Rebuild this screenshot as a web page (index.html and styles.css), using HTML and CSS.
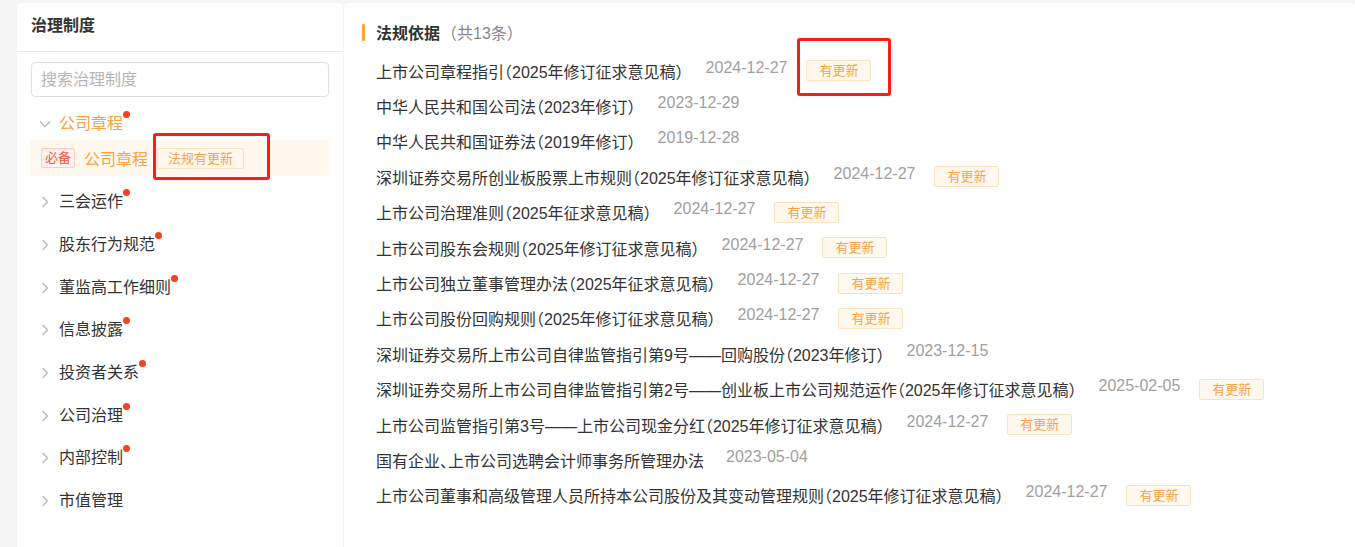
FILE: index.html
```html
<!DOCTYPE html>
<html lang="zh">
<head>
<meta charset="utf-8">
<title>治理制度</title>
<link rel="stylesheet" href="styles.css">
</head>
<body>
<div class="page">
  <aside class="side">
    <div class="side-head">治理制度</div>
    <div class="search"><input type="text" placeholder="搜索治理制度"></div>
    <div class="tree">
      <div class="node open">
        <svg class="chev" viewBox="0 0 12 12"><path d="M1 3.5 L6 8.5 L11 3.5" fill="none" stroke="#b4b9c1" stroke-width="1.4"/></svg>
        <span class="label dot">公司章程</span>
      </div>
      <div class="leaf">
        <span class="must">必备</span>
        <span class="leaf-text">公司章程</span>
        <span class="tag wide">法规有更新</span>
      </div>
      <div class="node"><svg class="chev" viewBox="0 0 12 12"><path d="M3.5 1 L8.5 6 L3.5 11" fill="none" stroke="#b4b9c1" stroke-width="1.4"/></svg><span class="label dot">三会运作</span></div>
      <div class="node"><svg class="chev" viewBox="0 0 12 12"><path d="M3.5 1 L8.5 6 L3.5 11" fill="none" stroke="#b4b9c1" stroke-width="1.4"/></svg><span class="label dot">股东行为规范</span></div>
      <div class="node"><svg class="chev" viewBox="0 0 12 12"><path d="M3.5 1 L8.5 6 L3.5 11" fill="none" stroke="#b4b9c1" stroke-width="1.4"/></svg><span class="label dot">董监高工作细则</span></div>
      <div class="node"><svg class="chev" viewBox="0 0 12 12"><path d="M3.5 1 L8.5 6 L3.5 11" fill="none" stroke="#b4b9c1" stroke-width="1.4"/></svg><span class="label dot">信息披露</span></div>
      <div class="node"><svg class="chev" viewBox="0 0 12 12"><path d="M3.5 1 L8.5 6 L3.5 11" fill="none" stroke="#b4b9c1" stroke-width="1.4"/></svg><span class="label dot">投资者关系</span></div>
      <div class="node"><svg class="chev" viewBox="0 0 12 12"><path d="M3.5 1 L8.5 6 L3.5 11" fill="none" stroke="#b4b9c1" stroke-width="1.4"/></svg><span class="label dot">公司治理</span></div>
      <div class="node"><svg class="chev" viewBox="0 0 12 12"><path d="M3.5 1 L8.5 6 L3.5 11" fill="none" stroke="#b4b9c1" stroke-width="1.4"/></svg><span class="label dot">内部控制</span></div>
      <div class="node"><svg class="chev" viewBox="0 0 12 12"><path d="M3.5 1 L8.5 6 L3.5 11" fill="none" stroke="#b4b9c1" stroke-width="1.4"/></svg><span class="label">市值管理</span></div>
    </div>
  </aside>
  <main class="main">
    <div class="main-head"><span class="bar"></span><span class="main-title">法规依据</span><span class="count">（共13条）</span></div>
    <ul class="laws">
      <li><span class="law">上市公司章程指引（2025年修订征求意见稿）</span><span class="date">2024-12-27</span><span class="tag">有更新</span></li>
      <li><span class="law">中华人民共和国公司法（2023年修订）</span><span class="date">2023-12-29</span></li>
      <li><span class="law">中华人民共和国证券法（2019年修订）</span><span class="date">2019-12-28</span></li>
      <li><span class="law">深圳证券交易所创业板股票上市规则（2025年修订征求意见稿）</span><span class="date">2024-12-27</span><span class="tag">有更新</span></li>
      <li><span class="law">上市公司治理准则（2025年征求意见稿）</span><span class="date">2024-12-27</span><span class="tag">有更新</span></li>
      <li><span class="law">上市公司股东会规则（2025年修订征求意见稿）</span><span class="date">2024-12-27</span><span class="tag">有更新</span></li>
      <li><span class="law">上市公司独立董事管理办法（2025年征求意见稿）</span><span class="date">2024-12-27</span><span class="tag">有更新</span></li>
      <li><span class="law">上市公司股份回购规则（2025年修订征求意见稿）</span><span class="date">2024-12-27</span><span class="tag">有更新</span></li>
      <li><span class="law">深圳证券交易所上市公司自律监管指引第9号——回购股份（2023年修订）</span><span class="date">2023-12-15</span></li>
      <li><span class="law">深圳证券交易所上市公司自律监管指引第2号——创业板上市公司规范运作（2025年修订征求意见稿）</span><span class="date">2025-02-05</span><span class="tag">有更新</span></li>
      <li><span class="law">上市公司监管指引第3号——上市公司现金分红（2025年修订征求意见稿）</span><span class="date">2024-12-27</span><span class="tag">有更新</span></li>
      <li><span class="law">国有企业、上市公司选聘会计师事务所管理办法</span><span class="date">2023-05-04</span></li>
      <li><span class="law">上市公司董事和高级管理人员所持本公司股份及其变动管理规则（2025年修订征求意见稿）</span><span class="date">2024-12-27</span><span class="tag">有更新</span></li>
    </ul>
  </main>
</div>
<div class="mark mark-a"></div>
<div class="mark mark-b"></div>
</body>
</html>
```

FILE: styles.css
```css
* { box-sizing: border-box; }
html, body { margin: 0; padding: 0; }
body {
  background: #f5f5f5;
  font-family: "Liberation Sans", "Noto Sans CJK SC", sans-serif;
  color: #333;
  height: 547px;
  overflow: hidden;
  position: relative;
}
.page {
  display: flex;
  gap: 1px;
  padding: 3px 0 0 17px;
  height: 547px;
}
.side {
  width: 326px;
  background: #fff;
  border-radius: 4px 4px 0 0;
}
.side-head {
  height: 49px;
  padding: 12px 0 0 14px;
  font-size: 16px;
  line-height: 22px;
  font-weight: bold;
  color: #333;
  border-bottom: 1px solid #e6ebf2;
}
.search { padding: 10px 14px 0 14px; }
.search input {
  width: 298px;
  height: 35px;
  border: 1px solid #dcdfe6;
  border-radius: 4px;
  padding: 0 9px;
  font-family: inherit;
  font-size: 16px;
  outline: none;
}
.search input::placeholder { color: #b5b5b5; }
.tree { margin-top: 7px; }
.node {
  display: flex;
  align-items: center;
  height: 42.7px;
  padding-left: 22px;
  padding-top: 4px;
}
.node.open { height: 36px; padding-top: 3px; }
.chev { width: 12px; height: 12px; margin-right: 8px; flex: none; }
.label {
  position: relative;
  font-size: 16px;
  line-height: 22px;
  color: #333;
}
.node.open .label { color: #f7a23f; }
.label.dot::after {
  content: "";
  position: absolute;
  right: -7px;
  top: -2px;
  width: 7px;
  height: 7px;
  border-radius: 50%;
  background: #f4421e;
}
.leaf {
  display: flex;
  align-items: center;
  height: 36px;
  margin: 0 14px 3px 13px;
  padding-left: 11px;
  background: #fff8ef;
}
.must {
  font-size: 13px;
  line-height: 18px;
  padding: 0 3px;
  border: 1px solid #ffcbc2;
  background: #fff1ee;
  color: #f4573f;
  border-radius: 2px;
  margin-right: 9px;
}
.leaf-text {
  font-size: 16px;
  color: #f7a23f;
  margin-right: 9px;
}
.tag {
  display: inline-block;
  font-size: 13px;
  line-height: 19px;
  height: 21px;
  padding: 0 12px;
  border: 1px solid #fde2c0;
  background: #fff8ef;
  color: #f5a548;
  border-radius: 2px;
}
.tag.wide { padding: 0 10px; }
.main {
  flex: 1;
  background: #fff;
  border-radius: 4px 4px 0 0;
  padding: 20px 0 0 18px;
}
.main-head {
  display: flex;
  align-items: center;
  height: 18px;
}
.bar {
  width: 3px;
  height: 17px;
  background: #f7a63c;
  border-radius: 1px;
  margin-right: 11px;
}
.main-title { font-size: 16px; font-weight: bold; color: #333; }
.count { font-size: 16px; color: #888; margin-left: 1px; }
.laws {
  list-style: none;
  margin: 12px 0 0 0;
  padding: 0 0 0 14px;
}
.laws li {
  display: flex;
  align-items: center;
  height: 35.4px;
}
.law { font-size: 16px; color: #333; font-feature-settings: "halt"; }
.date {
  font-size: 16px;
  color: #a0a0a0;
  margin-left: 22px;
  position: relative;
  top: -3px;
}
.laws .tag { margin-left: 19px; }
.mark {
  position: absolute;
  border: 3px solid #ff1a12;
  border-radius: 3px;
}
.mark-a { left: 153px; top: 133px; width: 117px; height: 47px; }
.mark-b { left: 797px; top: 38px; width: 94px; height: 58px; }
```
